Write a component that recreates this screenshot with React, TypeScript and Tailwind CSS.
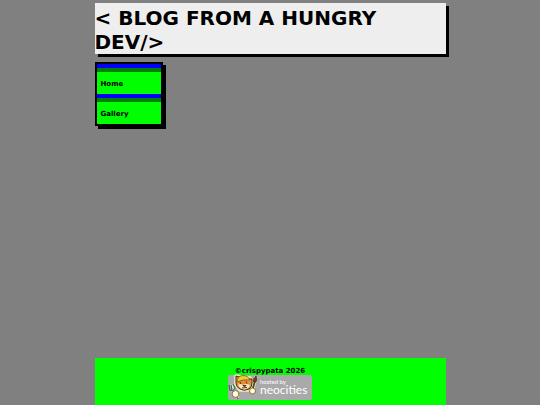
const links = [
  { label: "Home", href: "#home" },
  { label: "Gallery", href: "#gallery" },
];

function NeocitiesBadge() {
  return (
    <svg viewBox="0 0 84 27" className="block h-[27px] w-[84px]" role="img" aria-label="Hosted by Neocities">
      <rect x="0" y="1" width="84" height="25" rx="2" fill="#a9a9a9" />
      {/* light halo behind the cat and its tools */}
      <path
        d="M2 11 L5 17 L10 24 M6 10 L5 17 M28 3 L24 17 M8 2 L22 4 L24 9 L20 16 L12 16 L8 11 Z"
        fill="#e4eccb"
        stroke="#e4eccb"
        strokeWidth="3.6"
        strokeLinejoin="round"
      />
      {/* fork */}
      <path d="M1 11 L2 16 L5 17 L7 14 L5 10 M3 11 L4 16 M5 17 L10 25" fill="none" stroke="#3f6660" strokeWidth="1.3" />
      {/* brush */}
      <path d="M27 7 L24 17" stroke="#3b5424" strokeWidth="1.8" />
      <path d="M28 2 L25.5 5 L25.5 8 L28 8 L29 5 Z" fill="#9c2a18" stroke="#3a2218" strokeWidth=".6" />
      {/* cat */}
      <path
        d="M8 2 L11 3 Q17 1 20 5 L24 5 L24 9 Q24 13 21 15 Q16 17.5 12 15 Q8 13 8 9 Z"
        fill="#e98f38"
        stroke="#4a2c10"
        strokeWidth="1"
      />
      <path d="M10 11 Q12 9 15 11 Q18 9 22 11 Q21 15 16 15.5 Q12 15 10 11 Z" fill="#fbe6c8" />
      <path d="M9 8 Q9 2 15 1.5 Q20 1.5 22 6 Q15 5 9 8 Z" fill="#f2c83c" stroke="#7a5511" strokeWidth=".8" />
      <path d="M12 8 L13 10 M18 7.5 L19 9.5 M15 11.5 L18 11.5 L16.5 13 Z M14 14 L19 13.5" fill="none" stroke="#38220e" strokeWidth=".9" />
      {/* paws */}
      <circle cx="7.5" cy="20" r="3.4" fill="#fffbe8" stroke="#8a6420" strokeWidth=".9" />
      <circle cx="24.5" cy="17" r="3" fill="#fffbe8" stroke="#8a6420" strokeWidth=".9" />
      <text x="32" y="10" fontFamily="Lato, sans-serif" fontWeight="400" fontSize="6" fill="#ffffff">
        hosted by
      </text>
      <text x="32" y="20" fontFamily="Lato, sans-serif" fontWeight="400" fontSize="12" fill="#ffffff">
        neocities
      </text>
    </svg>
  );
}

export default function App() {
  return (
    <div className="min-h-screen bg-[#808080] font-['DejaVu_Sans',sans-serif] font-bold text-black">
      <div className="mx-auto flex min-h-screen w-[65%] flex-col pt-[3px]">
        <header className="bg-[#eeeeee] pt-[3px] shadow-[3px_3px_0_#000]">
          <h1 className="text-[20px] leading-6">&lt; BLOG FROM A HUNGRY DEV/&gt;</h1>
        </header>

        <nav className="mt-2 w-fit border-2 border-black bg-[#00ff00] shadow-[3px_3px_0_#000]">
          <ul className="w-16">
            {links.map((link) => (
              <li key={link.label} className="border-t-4 border-[#0000ff]">
                <a href={link.href} className="block border-t-4 border-[#008000] px-1 pt-2 pb-1.5 text-[7px] leading-2">
                  {link.label}
                </a>
              </li>
            ))}
          </ul>
        </nav>

        <footer className="mt-auto flex flex-col items-center bg-[#00ff00] pt-[9px] pb-1 text-[7px] leading-2">
          <p>©crispypata 2026</p>
          <a href="#neocities" className="-mt-px">
            <NeocitiesBadge />
          </a>
        </footer>
      </div>
    </div>
  );
}
